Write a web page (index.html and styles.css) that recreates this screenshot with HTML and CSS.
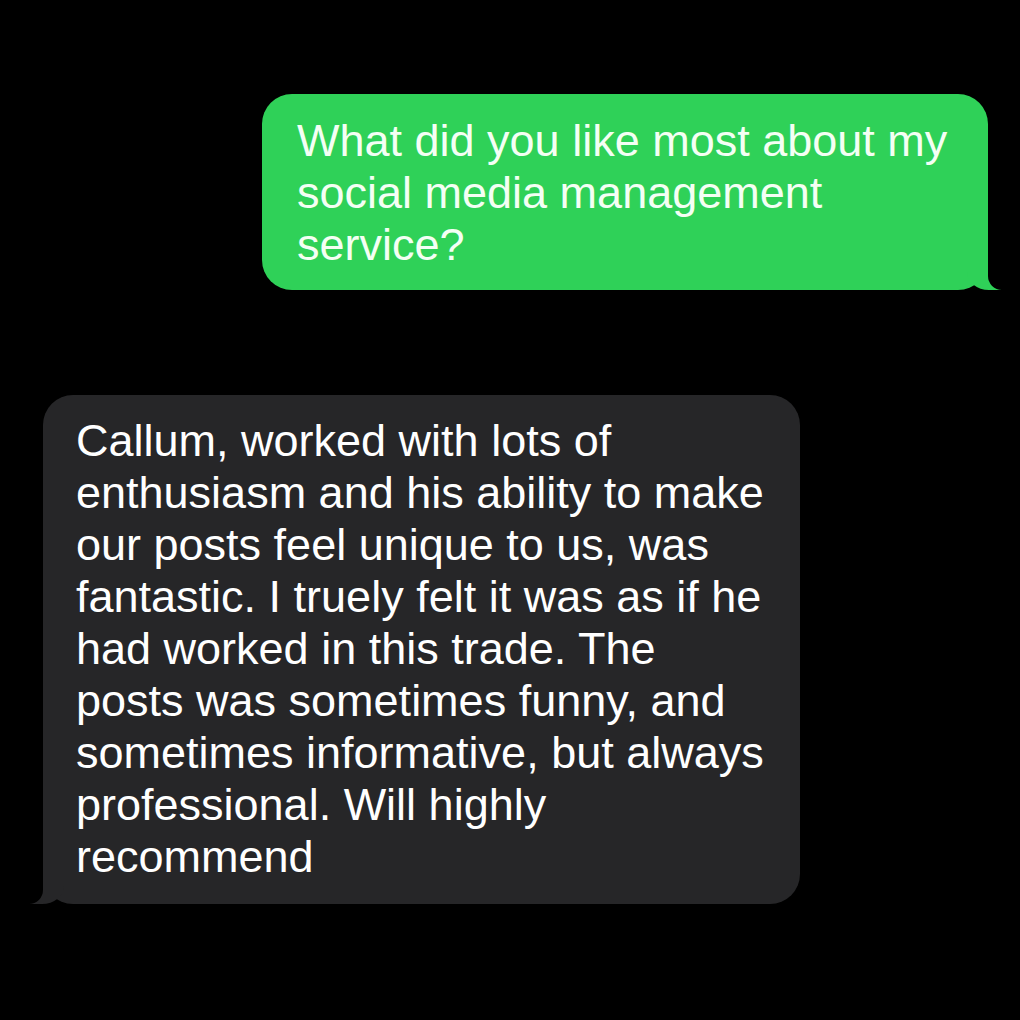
FILE: index.html
```html
<!DOCTYPE html>
<html lang="en">
<head>
  <meta charset="UTF-8" />
  <title>Messages</title>
  <link rel="stylesheet" href="styles.css">
</head>
<body>

<div class="thread">
  <div class="bubble sent">
    What did you like most about my social media management service?
  </div>

  <div class="bubble received">
    Callum, worked with lots of enthusiasm and his ability to make our posts feel unique to us, was fantastic. I truely felt it was as if he had worked in this trade. The posts was sometimes funny, and sometimes informative, but always professional. Will highly recommend
  </div>
</div>

</body>
</html>
```

FILE: styles.css
```css
body {
  background-color: #000;
  color: #fff;
  font-family: 'Liberation Sans', Arial, sans-serif;
  margin: 0;
  padding: 0;
}
.thread {
  display: flex;
  flex-direction: column;
  padding-top: 94px;
  gap: 105px;
}
.bubble {
  position: relative;
  font-size: 45px;
  line-height: 52px;
  border-radius: 30px;
  box-sizing: border-box;
}
.sent {
  align-self: flex-end;
  margin-right: 32px;
  width: 726px;
  padding: 21px 20px 19px 35px;
  background-color: #2fd158;
  color: #f4fff4;
}
.received {
  align-self: flex-start;
  margin-left: 43px;
  width: 757px;
  padding: 20px 30px 21px 33px;
  background-color: #262628;
}

/* tails */
.bubble::before,
.bubble::after {
  content: "";
  position: absolute;
  bottom: 0;
  height: 32px;
}
.sent::before {
  right: -13px;
  width: 34px;
  background-color: #2fd158;
  border-bottom-left-radius: 22px 18px;
}
.sent::after {
  right: -40px;
  width: 40px;
  background-color: #000;
  border-bottom-left-radius: 14px;
}
.received::before {
  left: -13px;
  width: 34px;
  background-color: #262628;
  border-bottom-right-radius: 22px 18px;
}
.received::after {
  left: -40px;
  width: 40px;
  background-color: #000;
  border-bottom-right-radius: 14px;
}
```
